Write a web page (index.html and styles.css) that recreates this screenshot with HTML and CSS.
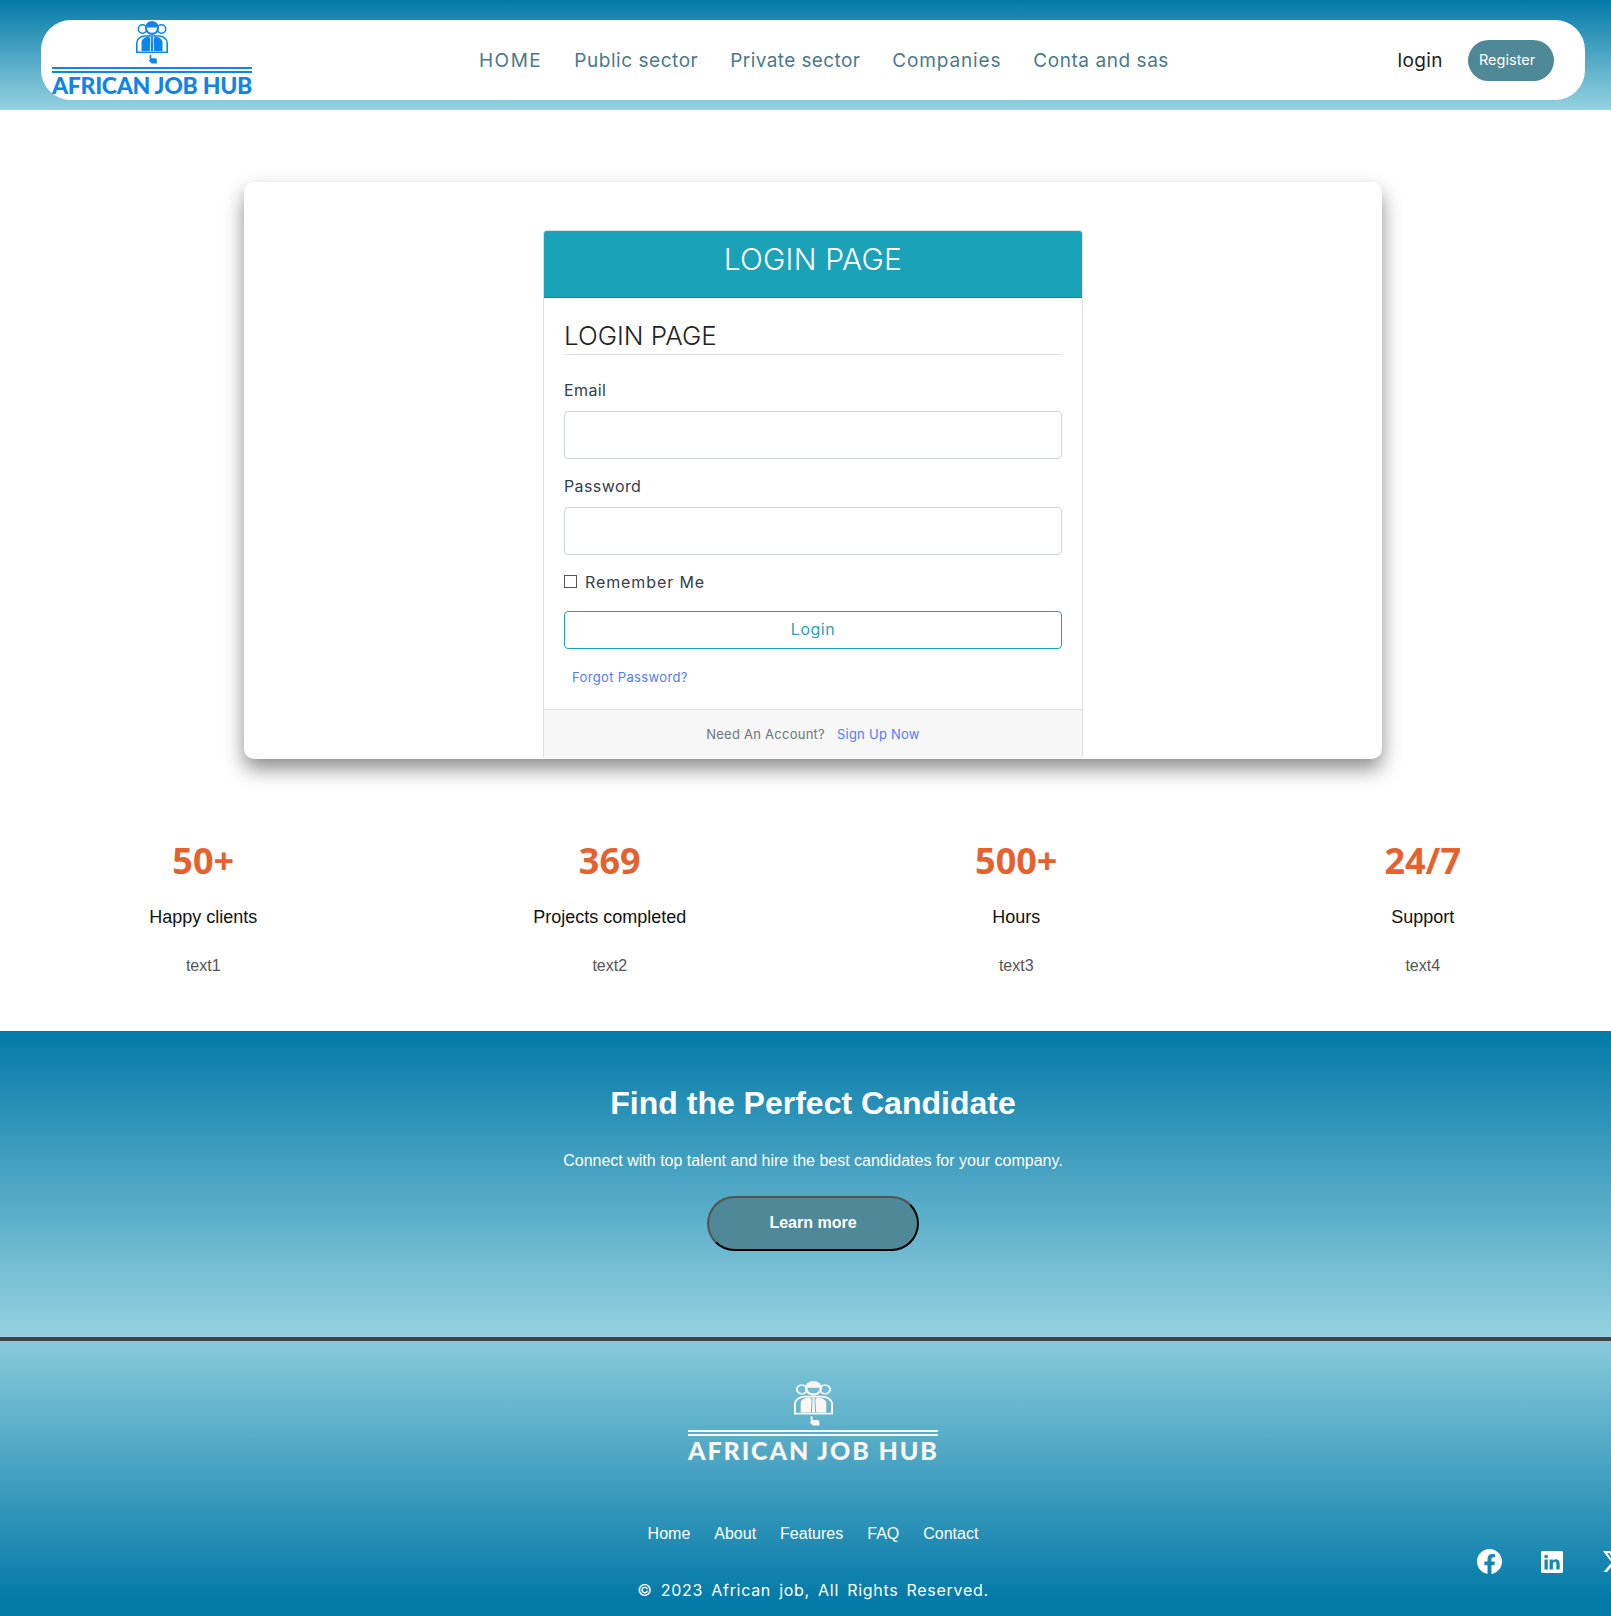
FILE: index.html
```html
<!DOCTYPE html>
<html lang="en">
<head>
<meta charset="utf-8">
<title>African Job Hub - Login</title>
<link rel="stylesheet" href="styles.css">
</head>
<body>
<div class="page">
  <header class="site-head">
    <nav class="navbar">
      <a class="logo logo-head" href="#">
        <svg class="logo-icon" viewBox="0 0 32 43" preserveAspectRatio="none" aria-hidden="true">
          <g fill="none" stroke="currentColor" stroke-width="1.6">
            <circle cx="6.500" cy="8" r="4.200"/><circle cx="25.500" cy="8" r="4.200"/>
            <path d="M.8 31.200V22.500C.8 17.500 5 15 9 15H23C27 15 31.200 17.500 31.200 22.500V31.200Z"/>
          </g>
          <circle cx="16" cy="7" r="7" fill="currentColor"/>
          <path class="face" d="M11 6.500H21C21 10 19 11.800 16 11.800S11 10 11 6.500Z"/>
          <path fill="currentColor" d="M5.500 30V21.500C5.500 18 8.500 16 13 15.500L14.500 18 13.800 30ZM26.500 30V21.500C26.500 18 23.500 16 19 15.500L17.500 18 18.200 30ZM15 16H17L16.800 18.500 17.300 30H14.700L15.200 18.500Z"/>
          <path fill="currentColor" d="M13.500 34.500C13.500 33.500 15.300 33.500 15.300 34.500V37.200H19C20.500 37.200 20.800 38 20.800 39V42.600H15.500L12.800 39.500 13.500 38.800 13.900 39.100Z"/>
        </svg>
        <span class="logo-rule"></span>
        <span class="logo-rule"></span>
        <span class="logo-name">AFRICAN JOB HUB</span>
      </a>
      <ul class="nav-links">
        <li class="nav-home"><a href="#">HOME</a></li>
        <li><a href="#">Public sector</a></li>
        <li class="nav-private"><a href="#">Private sector</a></li>
        <li class="nav-companies"><a href="#">Companies</a></li>
        <li><a href="#">Conta and sas</a></li>
      </ul>
      <a class="nav-login" href="#">login</a>
      <a class="nav-register" href="#">Register</a>
    </nav>
  </header>

  <main class="login-panel">
    <section class="login-card">
      <h2 class="login-card-head">LOGIN PAGE</h2>
      <form class="login-card-body">
        <h3 class="legend">LOGIN PAGE</h3>
        <label class="field-label" for="email">Email</label>
        <input class="field" id="email" type="email">
        <label class="field-label" for="password">Password</label>
        <input class="field" id="password" type="password">
        <label class="remember"><input class="remember-box" type="checkbox"><span>Remember Me</span></label>
        <button class="login-btn" type="button">Login</button>
        <a class="forgot" href="#">Forgot Password?</a>
      </form>
      <div class="login-card-foot">Need An Account? <a href="#">Sign Up Now</a></div>
    </section>
  </main>

  <section class="stats">
    <div class="stat"><div class="stat-num">50+</div><div class="stat-label">Happy clients</div><div class="stat-text">text1</div></div>
    <div class="stat"><div class="stat-num">369</div><div class="stat-label">Projects completed</div><div class="stat-text">text2</div></div>
    <div class="stat"><div class="stat-num">500+</div><div class="stat-label">Hours</div><div class="stat-text">text3</div></div>
    <div class="stat"><div class="stat-num">24/7</div><div class="stat-label">Support</div><div class="stat-text">text4</div></div>
  </section>

  <section class="cta">
    <h2 class="cta-title">Find the Perfect Candidate</h2>
    <p class="cta-text">Connect with top talent and hire the best candidates for your company.</p>
    <button class="cta-btn" type="button">Learn more</button>
  </section>

  <footer class="site-foot">
    <a class="logo logo-foot" href="#">
      <svg class="logo-icon" viewBox="0 0 32 43" preserveAspectRatio="none" aria-hidden="true">
        <g fill="none" stroke="currentColor" stroke-width="1.6">
          <circle cx="6.500" cy="8" r="4.200"/><circle cx="25.500" cy="8" r="4.200"/>
          <path d="M.8 31.200V22.500C.8 17.500 5 15 9 15H23C27 15 31.200 17.500 31.200 22.500V31.200Z"/>
        </g>
        <circle cx="16" cy="7" r="7" fill="currentColor"/>
        <path class="face" d="M11 6.500H21C21 10 19 11.800 16 11.800S11 10 11 6.500Z"/>
        <path fill="currentColor" d="M5.500 30V21.500C5.500 18 8.500 16 13 15.500L14.500 18 13.800 30ZM26.500 30V21.500C26.500 18 23.500 16 19 15.500L17.500 18 18.200 30ZM15 16H17L16.800 18.500 17.300 30H14.700L15.200 18.500Z"/>
        <path fill="currentColor" d="M13.500 34.500C13.500 33.500 15.300 33.500 15.300 34.500V37.200H19C20.500 37.200 20.800 38 20.800 39V42.600H15.500L12.800 39.500 13.500 38.800 13.900 39.100Z"/>
      </svg>
      <span class="logo-rule"></span>
      <span class="logo-rule"></span>
      <span class="logo-name">AFRICAN JOB HUB</span>
    </a>
    <ul class="foot-links">
      <li><a href="#">Home</a></li>
      <li><a href="#">About</a></li>
      <li><a href="#">Features</a></li>
      <li><a href="#">FAQ</a></li>
      <li><a href="#">Contact</a></li>
    </ul>
    <p class="copyright">© 2023 African job, All Rights Reserved.</p>
    <div class="social">
      <a href="#" aria-label="Facebook"><svg class="ico-fb" viewBox="0 0 16 16" fill="currentColor"><path d="M16 8.049c0-4.446-3.582-8.05-8-8.05C3.58 0-.002 3.603-.002 8.05c0 4.017 2.926 7.347 6.75 7.951v-5.625h-2.03V8.05H6.75V6.275c0-2.017 1.195-3.131 3.022-3.131.876 0 1.791.157 1.791.157v1.98h-1.009c-.993 0-1.303.621-1.303 1.258v1.51h2.218l-.354 2.326H9.25V16c3.824-.604 6.75-3.934 6.75-7.951"/></svg></a>
      <a href="#" aria-label="LinkedIn"><svg class="ico-in" viewBox="0 0 16 16" fill="currentColor"><path d="M0 1.146C0 .513.526 0 1.175 0h13.65C15.474 0 16 .513 16 1.146v13.708c0 .633-.526 1.146-1.175 1.146H1.175C.526 16 0 15.487 0 14.854zm4.943 12.248V6.169H2.542v7.225zm-1.2-8.212c.837 0 1.358-.554 1.358-1.248-.015-.709-.52-1.248-1.342-1.248S2.4 3.226 2.4 3.934c0 .694.521 1.248 1.327 1.248zm4.908 8.212V9.359c0-.216.016-.432.08-.586.173-.431.568-.878 1.232-.878.869 0 1.216.662 1.216 1.634v3.865h2.401V9.25c0-2.22-1.184-3.252-2.764-3.252-1.274 0-1.845.7-2.165 1.193v.025h-.016l.016-.025V6.169h-2.4c.03.678 0 7.225 0 7.225z"/></svg></a>
      <a href="#" aria-label="X"><svg class="ico-x" viewBox="0 0 16 16" fill="currentColor"><path d="M12.6.75h2.454l-5.360 6.142L16 15.250h-4.937l-3.867-5.070-4.425 5.070H.316l5.733-6.570L0 .75h5.063l3.495 4.633L12.601.75Zm-.86 13.028h1.360L4.323 2.145H2.865z"/></svg></a>
    </div>
  </footer>
</div>
</body>
</html>
```
FILE: styles.css
```css
* { box-sizing: border-box; }
html { overflow: hidden; }
body { margin: 0; background: #fff; font-family: "Inter", "Liberation Sans", sans-serif; }
a { text-decoration: none; color: inherit; }
ul { list-style: none; margin: 0; padding: 0; }
h2, h3, p { margin: 0; }

.page { width: 1626px; height: 1616px; overflow: hidden; }

/* Header */
.site-head { height: 110px; padding: 20px 41px 10px; background: linear-gradient(#047aa8, #96d2e0); }
.navbar { height: 80px; background: #fff; border-radius: 30px; display: flex; align-items: center; padding: 0 31px 0 11px; }
.nav-links { display: flex; gap: 32px; margin-left: 227px; font-size: 19px; letter-spacing: .55px; color: #4a7a8a; }
.nav-home { letter-spacing: 1.5px; }
.nav-private { letter-spacing: .4px; }
.nav-companies { letter-spacing: .85px; }
.nav-login { margin-left: auto; font-size: 19px; letter-spacing: .4px; color: #222; }
.nav-register { margin-left: 25px; width: 86px; height: 41px; border-radius: 21px; background: #4f8896; color: #fff; font-size: 14.5px; line-height: 40px; padding-left: 11px; }

/* Logo */
.logo { display: flex; flex-direction: column; align-items: stretch; }
.logo-head { width: 200px; height: 80px; color: #0e85e8; --face: #fff; }
.logo-foot { width: 250px; color: #fbf6f1; margin: 0 auto; --face: #6fbbd3; }
.logo-icon { display: block; align-self: center; margin-bottom: 1px; }
.face { fill: var(--face); }
.logo-head .logo-icon { width: 32px; height: 43px; margin-top: 1px; }
.logo-foot .logo-icon { width: 39px; height: 45px; margin-top: -1px; margin-bottom: 2px; }
.logo-rule { display: block; height: 2px; background: currentColor; margin-top: 2px; }
.logo-name { font-family: "Lato", sans-serif; font-weight: 900; white-space: nowrap; text-align: center; line-height: 1; }
.logo-head .logo-name { font-size: 23px; letter-spacing: -.3px; margin-top: 1px; }
.logo-foot .logo-name { font-size: 25px; letter-spacing: 1.9px; margin-top: 2px; }

/* Login */
.login-panel { width: 1138px; height: 577px; margin: 72px auto 0; background: #fff; border-radius: 10px; box-shadow: 0 10px 20px rgba(0,0,0,.45); padding-top: 48px; }
.login-card { width: 540px; margin: 0 auto; height: 529px; border: 1px solid #dfdfdf; border-bottom: 0; border-radius: 4px; display: flex; flex-direction: column; }
.login-card-head { height: 67px; background: #19a2b8; color: #fff; text-align: center; font-size: 30px; font-weight: 300; line-height: 56px; letter-spacing: .2px; border-radius: 3px 3px 0 0; border-bottom: 1px solid #148a9d; }
.login-card-body { flex: 1; padding: 0 20px; display: flex; flex-direction: column; align-items: stretch; }
.legend { font-size: 26px; font-weight: 300; color: #212529; line-height: 34px; margin-top: 21px; padding-bottom: 1px; border-bottom: 1px solid #dee2e6; }
.field-label { font-size: 16px; color: #33404d; line-height: 20px; margin-top: 25px; margin-bottom: 11px; letter-spacing: .4px; }
.field-label + .field + .field-label { margin-top: 17px; }
.field { display: block; width: 100%; height: 48px; border: 1px solid #ced4da; border-radius: 4px; background: #fff; }
.remember { display: flex; align-items: center; gap: 8px; margin-top: 17px; font-size: 16px; letter-spacing: .9px; color: #33404d; line-height: 20px; }
.remember-box { appearance: none; width: 13px; height: 13px; margin: 0 0 2px; border: 1px solid #555; background: #fff; }
.login-btn { display: block; margin-top: 19px; height: 38px; padding: 0 0 2px; border: 1px solid #19a2b8; border-radius: 4px; background: #fff; color: #2e9fbd; font: 16px "Inter", sans-serif; letter-spacing: .5px; }
.forgot { margin: 19px 0 0 8px; font-size: 13px; letter-spacing: .35px; color: #4f7bff; line-height: 18px; }
.login-card-foot { height: 50px; background: #f7f7f7; border-top: 1px solid #dfdfdf; text-align: center; font-size: 13px; letter-spacing: .25px; color: #6c757d; line-height: 49px; }
.login-card-foot a { color: #4f7bff; margin-left: 8px; }

/* Stats */
.stats { display: grid; grid-template-columns: repeat(4, 1fr); height: 272px; padding-top: 80px; text-align: center; }
.stat-num { font-family: "Open Sans", sans-serif; font-weight: 700; font-size: 36px; line-height: 44px; color: #e5622f; }
.stat-label { font-family: "Liberation Sans", sans-serif; font-size: 18px; line-height: 22px; color: #111; margin-top: 23px; }
.stat-text { font-family: "Liberation Sans", sans-serif; font-size: 16px; line-height: 20px; color: #555; margin-top: 28px; }

/* CTA */
.cta { height: 306px; padding-top: 53px; text-align: center; background: linear-gradient(#047aa8, #96d2e0); font-family: "Liberation Sans", sans-serif; color: #fff; }
.cta-title { font-size: 32px; font-weight: 700; line-height: 38px; }
.cta-text { font-size: 16px; line-height: 20px; margin-top: 29px; }
.cta-btn { display: block; width: 212px; height: 55px; margin: 25px auto 0; padding: 0 0 2px; border: 2px outset #000; border-radius: 28px; background: #4f8896; color: #fff; font: 700 16px "Liberation Sans", sans-serif; }

/* Footer */
.site-foot { position: relative; height: 279px; padding-top: 41px; border-top: 4px solid #444; background: linear-gradient(#88cadb, #047aa8 94%); color: #fff; text-align: center; }
.foot-links { display: flex; justify-content: center; gap: 24px; margin-top: 61px; font: 16px/20px "Liberation Sans", sans-serif; }
.copyright { margin-top: 36px; font-size: 16px; line-height: 20px; word-spacing: 3px; letter-spacing: .7px; }
.social { position: absolute; right: 0; top: 208px; display: flex; align-items: center; gap: 39px; }
.social a { display: block; color: #fff; }
.social svg { display: block; }
.ico-fb { width: 25px; height: 25px; }
.ico-in { width: 22px; height: 22px; }
.ico-x { width: 23px; height: 23px; margin-left: 1px; }
```
